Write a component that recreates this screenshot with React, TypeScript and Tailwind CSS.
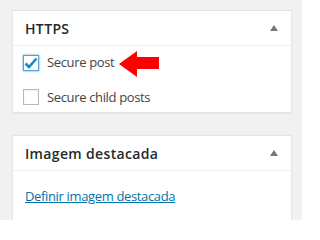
import React from "react";

function Toggle() {
  return (
    <svg width="8" height="6" viewBox="0 0 8 6" aria-hidden className="text-[#72777c]">
      <path d="M4 0 L8 6 L0 6 Z" fill="currentColor" />
    </svg>
  );
}

function Checkbox({ checked }: { checked?: boolean }) {
  return (
    <span
      className={
        checked
          ? "flex h-4 w-4 shrink-0 items-center justify-center border border-[#5b9dd9] bg-white shadow-[0_0_2px_rgba(30,140,190,0.8)]"
          : "flex h-4 w-4 shrink-0 items-center justify-center border border-[#b4b9be] bg-white shadow-[inset_0_1px_2px_rgba(0,0,0,0.07)]"
      }
    >
      {checked && (
        <svg width="14" height="12" viewBox="0 0 14 12" aria-hidden>
          <path d="M1.5 6.5 L5 10 L12.5 1.5" fill="none" stroke="#1e8cbe" strokeWidth="2.6" />
        </svg>
      )}
    </span>
  );
}

function Postbox({ title, children }: { title: string; children: React.ReactNode }) {
  return (
    <div className="w-[280px] border border-[#e5e5e5] bg-white shadow-[0_1px_1px_rgba(0,0,0,0.04)]">
      <div className="flex h-[35px] items-center justify-between border-b border-[#eeeeee] pl-3 pr-[13px]">
        <h2 className="text-[14px] font-semibold tracking-[0.35px] text-[#23282d]">{title}</h2>
        <Toggle />
      </div>
      {children}
    </div>
  );
}

export default function App() {
  return (
    <div
      className="relative h-[220px] w-[302px] overflow-hidden bg-[#f1f1f1] pl-3 pt-[10px]"
      style={{ fontFamily: '"Open Sans", sans-serif' }}
    >
      <div className="flex flex-col gap-[22px]">
        <Postbox title="HTTPS">
          <div className="flex flex-col gap-[15px] px-[10px] pb-[5px] pt-[7px] text-[13px] tracking-[-0.35px] text-[#444]">
            <label className="flex items-center gap-[8px]">
              <Checkbox checked />
              Secure post
            </label>
            <label className="flex items-center gap-[8px]">
              <Checkbox />
              Secure child posts
            </label>
          </div>
        </Postbox>
        <Postbox title="Imagem destacada">
          <div className="px-3 pb-10 pt-[16px] text-[13px] tracking-[-0.35px]">
            <a href="#" className="text-[#0073aa] underline">
              Definir imagem destacada
            </a>
          </div>
        </Postbox>
      </div>
      <svg className="absolute left-[118px] top-[50px]" width="42" height="28" viewBox="0 0 42 28" aria-hidden>
        <path d="M1 14 L19 1 L19 7 L41 7 L41 19 L19 19 L19 27 Z" fill="#ff0000" />
      </svg>
    </div>
  );
}
